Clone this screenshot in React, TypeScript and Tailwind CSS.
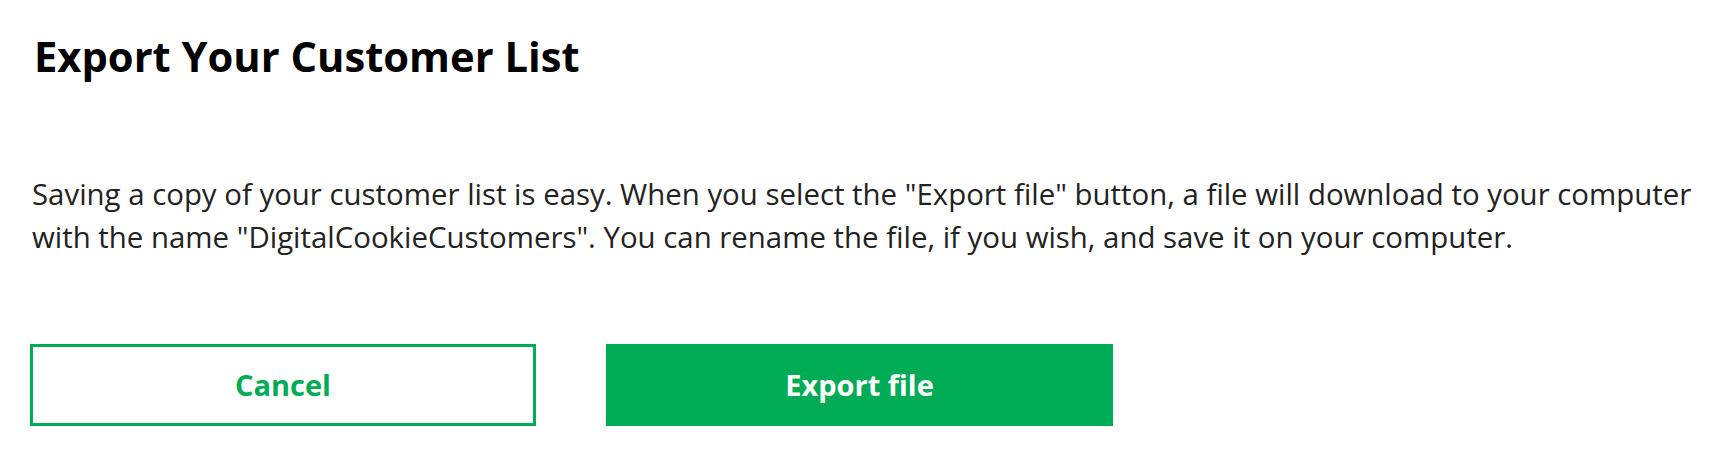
export default function App() {
  return (
    <div
      className="min-h-screen w-full bg-white pl-[32px] pr-[16px] pt-[35px] text-black"
      style={{ fontFamily: '"Open Sans", "Liberation Sans", sans-serif' }}
    >
      <h1 className="pl-[2px] text-[41.7px] font-bold leading-none text-black">
        Export Your Customer List
      </h1>

      <p className="mt-[96px] text-[29.4px] leading-[43px] text-[#222]">
        Saving a copy of your customer list is easy. When you select the "Export file" button, a file will
        download to your computer with the name "DigitalCookieCustomers". You can rename the file, if you
        wish, and save it on your computer.
      </p>

      <div className="mt-[85px] flex gap-[70px]">
        <button className="-ml-[2px] flex h-[82px] w-[506px] items-center justify-center border-[3px] border-[#00ab55] bg-white text-[29px] font-bold text-[#00ab55]">
          Cancel
        </button>
        <button className="flex h-[82px] w-[507px] items-center justify-center bg-[#00ab55] text-[29px] font-bold text-white">
          Export file
        </button>
      </div>
    </div>
  );
}
